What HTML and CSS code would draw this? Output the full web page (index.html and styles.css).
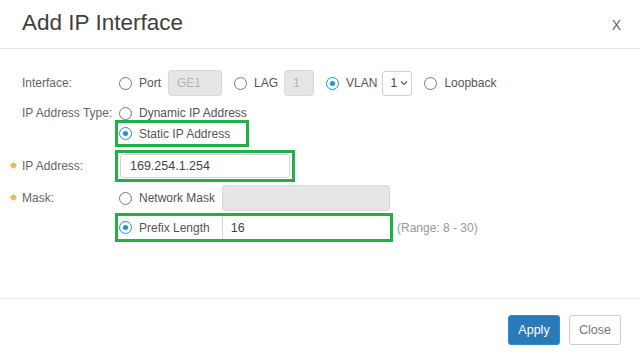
FILE: index.html
```html
<!DOCTYPE html>
<html lang="en">
<head>
    <meta charset="UTF-8">
    <title>Add IP Interface</title>
    <link rel="stylesheet" href="styles.css">
</head>
<body>
    <div class="modal">
        <div class="modal-header">
            <h1>Add IP Interface</h1>
            <span class="close">X</span>
        </div>

        <div class="modal-body">
            <div class="row row-interface">
                <div class="label">Interface:</div>
                <div class="controls pad">
                    <span class="radio"></span><span class="opt">Port</span>
                    <span class="box box-off w-port">GE1</span>
                    <span class="radio gap"></span><span class="opt">LAG</span>
                    <span class="box box-off w-lag">1</span>
                    <span class="radio on gap"></span><span class="opt">VLAN</span>
                    <span class="select">1
                        <svg width="8" height="6" viewBox="0 0 8 6"><path d="M1 1.5 L4 4.5 L7 1.5" fill="none" stroke="#555" stroke-width="1.1"/></svg>
                    </span>
                    <span class="radio gap"></span><span class="opt">Loopback</span>
                </div>
            </div>

            <div class="row row-type">
                <div class="label">IP Address Type:</div>
                <div class="controls pad">
                    <span class="radio"></span><span class="opt">Dynamic IP Address</span>
                </div>
            </div>

            <div class="row row-static">
                <div class="label"></div>
                <div class="controls hl hl-static">
                    <span class="radio on"></span><span class="opt">Static IP Address</span>
                </div>
            </div>

            <div class="row row-ip">
                <div class="label">
                    <svg class="req" width="7" height="7" viewBox="0 0 8 8"><polygon points="4,0 4.9,1.9 6.8,1.2 6.1,3.1 8,4 6.1,4.9 6.8,6.8 4.9,6.1 4,8 3.1,6.1 1.2,6.8 1.9,4.9 0,4 1.9,3.1 1.2,1.2 3.1,1.9" fill="#f0a030"/><circle cx="4" cy="4" r="1" fill="#fde3b8"/></svg>
                    IP Address:
                </div>
                <div class="controls hl hl-ip">
                    <span class="box box-text w-ip">169.254.1.254</span>
                </div>
            </div>

            <div class="row row-mask">
                <div class="label">
                    <svg class="req" width="7" height="7" viewBox="0 0 8 8"><polygon points="4,0 4.9,1.9 6.8,1.2 6.1,3.1 8,4 6.1,4.9 6.8,6.8 4.9,6.1 4,8 3.1,6.1 1.2,6.8 1.9,4.9 0,4 1.9,3.1 1.2,1.2 3.1,1.9" fill="#f0a030"/><circle cx="4" cy="4" r="1" fill="#fde3b8"/></svg>
                    Mask:
                </div>
                <div class="controls pad">
                    <span class="radio"></span><span class="opt">Network Mask</span>
                    <span class="box box-off w-mask"></span>
                </div>
            </div>

            <div class="row row-prefix">
                <div class="label"></div>
                <div class="controls hl hl-prefix">
                    <span class="radio on"></span><span class="opt">Prefix Length</span>
                    <span class="box box-text w-prefix">16</span>
                </div>
                <span class="hint">(Range: 8 - 30)</span>
            </div>
        </div>

        <div class="modal-footer">
            <button class="btn btn-primary">Apply</button>
            <button class="btn">Close</button>
        </div>
    </div>
</body>
</html>
```

FILE: styles.css
```css
body {
    margin: 0;
    padding: 0;
    background: #fff;
    font-family: 'Liberation Sans', Arial, sans-serif;
    font-size: 12px;
    color: #555;
}

.modal {
    width: 640px;
    height: 357px;
    display: flex;
    flex-direction: column;
}

.modal-header {
    height: 49px;
    flex: none;
    box-sizing: border-box;
    border-bottom: 1px solid #e6e6e6;
    display: flex;
    align-items: center;
    justify-content: space-between;
    padding: 0 19px 2px 22px;
}

.modal-header h1 {
    margin: 0;
    font-size: 22.5px;
    font-weight: normal;
    color: #404040;
}

.close {
    font-size: 14px;
    color: #666;
    margin-top: 4px;
}

.modal-body {
    flex: 1;
    padding: 20px 0 0 22px;
}

.row {
    display: flex;
    align-items: center;
}

.label {
    width: 93px;
    flex: none;
    position: relative;
    color: #666;
}

.req {
    position: absolute;
    left: -12px;
    top: 3px;
}

.controls {
    display: flex;
    align-items: center;
}

.pad {
    padding-left: 4px;
}

.opt {
    margin-left: 7px;
    color: #555;
}

.radio {
    width: 11px;
    height: 11px;
    border: 1px solid #777;
    border-radius: 50%;
    flex: none;
    position: relative;
}

.radio.on {
    border-color: #1a93d9;
}

.radio.on::after {
    content: '';
    position: absolute;
    left: 3px;
    top: 3px;
    width: 5px;
    height: 5px;
    border-radius: 50%;
    background: #1a93d9;
}

.radio.gap {
    margin-left: 12px;
}

.box {
    box-sizing: border-box;
    height: 26px;
    border-radius: 3px;
    display: flex;
    align-items: center;
    padding-left: 8px;
}

.box-off {
    background: #e6e6e6;
    border: 1px solid #dadada;
    color: #b5b5b5;
}

.box-text {
    background: #fff;
    border: 1px solid #d4d4d4;
    color: #444;
    font-size: 12.5px;
}

.w-port { width: 54px; margin-left: 7px; }
.w-lag { width: 30px; margin-left: 6px; }
.w-mask { width: 168px; margin-left: 7px; }

.select {
    box-sizing: border-box;
    width: 30px;
    height: 25px;
    margin-left: 5px;
    border: 1px solid #cfcfcf;
    border-radius: 3px;
    display: flex;
    align-items: center;
    gap: 3px;
    padding-left: 7px;
    color: #444;
}

.row-interface { height: 28px; }
.row-type { height: 14px; margin-top: 9px; }

.hl {
    border: 3px solid #1fb04a;
    box-sizing: border-box;
}

.hl-static {
    height: 27px;
    width: 134px;
    padding-left: 1px;
}

.row-ip { margin-top: 3px; }

.hl-ip {
    height: 32px;
    width: 180px;
    padding: 1px 2px;
}

.w-ip {
    width: 172px;
    height: 24px;
    padding-left: 9px;
}

.row-mask { margin-top: 3px; }

.row-prefix { margin-top: 2px; }

.hl-prefix {
    height: 29px;
    width: 278px;
    padding-left: 1px;
}

.w-prefix {
    width: 166px;
    height: 23px;
    margin-left: 12px;
    border-radius: 0;
    border-width: 0 0 0 1px;
}

.hint {
    margin-left: 4px;
    color: #999;
}

.modal-footer {
    height: 59px;
    flex: none;
    box-sizing: border-box;
    border-top: 1px solid #ececec;
    display: flex;
    justify-content: flex-end;
    align-items: flex-start;
    padding: 16px 19px 0 0;
    gap: 9px;
}

.btn {
    font-family: 'Liberation Sans', Arial, sans-serif;
    font-size: 12.5px;
    height: 30px;
    width: 52px;
    padding: 0;
    border: 1px solid #ccc;
    border-radius: 3px;
    background: #fff;
    color: #777;
}

.btn-primary {
    background: #2c79b8;
    border-color: #2591d4;
    color: #fff;
}
```
